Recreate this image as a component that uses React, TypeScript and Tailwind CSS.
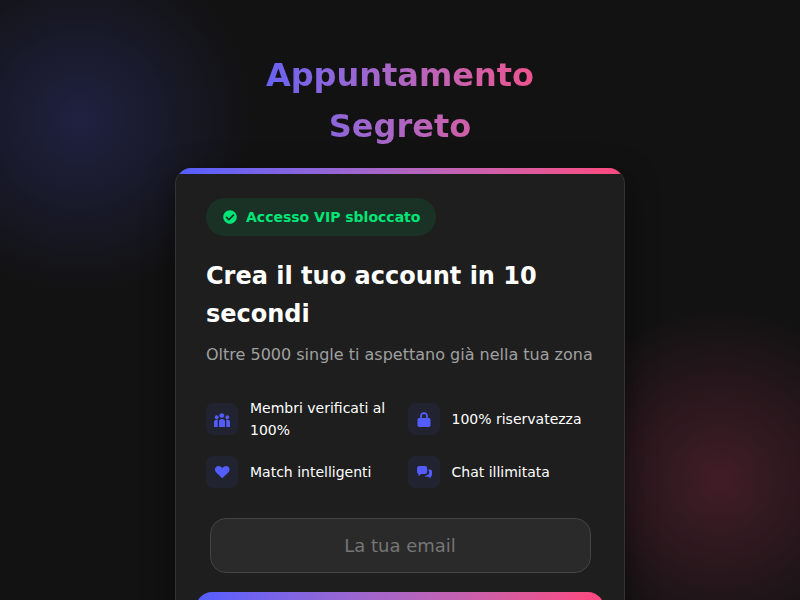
import { FaCheckCircle } from "react-icons/fa";

const UsersIcon = () => (
  <svg viewBox="0 0 16 16" fill="currentColor" className="h-4 w-4">
    <circle cx="7.8" cy="4.6" r="2.4" />
    <circle cx="2.7" cy="6.2" r="1.9" />
    <circle cx="13.3" cy="6.2" r="1.9" />
    <path d="M5 10.5C5 9 6.2 8 8 8s3 1 3 2.5V16H5z" />
    <path d="M0 11c0-1.6 1.2-2.6 3.7-2.6V16H0z" />
    <path d="M16 11c0-1.6-1.2-2.6-3.7-2.6V16H16z" />
  </svg>
);

const LockIcon = () => (
  <svg viewBox="0 0 16 16" fill="currentColor" className="h-4 w-4">
    <path d="M4.2 7V5a3.8 3.8 0 0 1 7.6 0v2h-1.7V5a2.1 2.1 0 0 0-4.2 0v2z" />
    <rect x="1.5" y="7" width="13" height="9" rx="1.8" />
  </svg>
);

const HeartIcon = () => (
  <svg viewBox="0 0 16 16" fill="currentColor" className="h-4 w-4">
    <path d="M8.3 14.2 2 8.2C-.2 5.8 1.3 2 4.6 2c1.7 0 2.9 1 3.7 2.2C9.1 3 10.3 2 12 2c3.3 0 4.7 3.8 2.6 6.2z" />
  </svg>
);

const ChatIcon = () => (
  <svg viewBox="0 0 16 16" fill="currentColor" className="h-4 w-4">
    <path d="M3 2h6a2.2 2.2 0 0 1 2.2 2.2v3.6A2.2 2.2 0 0 1 9 10H5.2L2.6 12.2V10A2.2 2.2 0 0 1 1 7.8V4.2A2.2 2.2 0 0 1 3 2z" />
    <path d="M12.4 5.4h1.4A2.2 2.2 0 0 1 16 7.6v3A2.2 2.2 0 0 1 14.6 12.7V14.5l-2.4-1.8H8.5l2-1.4c1.2 0 2.7-.9 2.7-3z" />
  </svg>
);

const features = [
  { icon: UsersIcon, label: "Membri verificati al 100%" },
  { icon: LockIcon, label: "100% riservatezza" },
  { icon: HeartIcon, label: "Match intelligenti" },
  { icon: ChatIcon, label: "Chat illimitata" },
];

export default function App() {
  return (
    <div className="h-screen overflow-hidden bg-[#121212] bg-[radial-gradient(circle_at_10%_20%,rgba(83,93,255,0.2)_0%,transparent_20%),radial-gradient(circle_at_90%_80%,rgba(255,71,126,0.2)_0%,transparent_20%)] font-['DejaVu_Sans',sans-serif] text-white">
      <div className="mx-auto flex w-[450px] flex-col pt-[50px]">
        <div className="mx-auto w-[340px] bg-gradient-to-r from-[#535dff] to-[#ff477e] bg-clip-text text-center text-[32px] leading-[51px] font-bold text-transparent">
          Appuntamento Segreto
        </div>

        <div className="relative mt-[16px] overflow-hidden rounded-2xl border border-t-0 border-[#333333] bg-[#1e1e1e] p-[30px] shadow-[0_10px_30px_rgba(0,0,0,0.5)]">
          <div className="absolute top-0 right-0 left-0 h-[6px] bg-gradient-to-r from-[#535dff] to-[#ff477e]" />

          <div className="inline-flex h-[38px] items-center gap-[9px] rounded-full bg-[#00e676]/10 pr-[16px] pl-[17px] text-sm font-semibold text-[#00e676]">
            <FaCheckCircle className="h-[14px] w-[14px]" />
            Accesso VIP sbloccato
          </div>

          <h2 className="mt-[21px] text-2xl leading-[38px] font-bold">Crea il tuo account in 10 secondi</h2>
          <p className="mt-[9px] text-base leading-[26px] text-[#a0a0a0]">Oltre 5000 single ti aspettano già nella tua zona</p>

          <div className="mt-[29px] grid grid-cols-2 gap-x-[15px] gap-y-[15px]">
            {features.map(({ icon: Icon, label }) => (
              <div key={label} className="flex items-center gap-3">
                <div className="flex h-8 w-8 shrink-0 items-center justify-center rounded-lg bg-[#535dff]/[0.08] text-[#535dff]">
                  <Icon />
                </div>
                <span className="text-sm leading-[22px]">{label}</span>
              </div>
            ))}
          </div>

          <input
            placeholder="La tua email"
            className="mx-auto mt-[30px] block h-[55px] w-[381px] rounded-2xl border border-[#444444] bg-[#2a2a2a] text-center text-lg text-white outline-none placeholder:text-[#757575]"
          />

          <button className="-mx-[10px] mt-[19px] block h-[58px] w-[408px] rounded-2xl bg-gradient-to-r from-[#535dff] to-[#ff477e] font-bold text-white" />
        </div>
      </div>
    </div>
  );
}
